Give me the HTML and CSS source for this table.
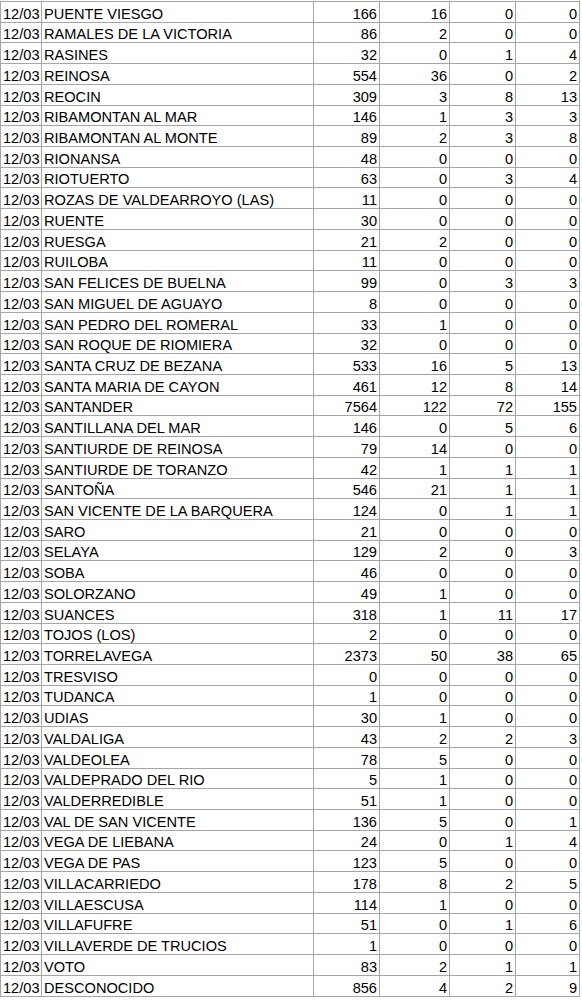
FILE: index.html
```html
<!DOCTYPE html>
<html lang="es">
<head>
<meta charset="utf-8">
<title>Datos municipios</title>
<link rel="stylesheet" href="styles.css">
</head>
<body>
<table class="sheet">
<colgroup>
<col class="c-date"><col class="c-name"><col class="c-n1"><col class="c-n2"><col class="c-n3"><col class="c-n4">
</colgroup>
<tbody>
<tr><td>12/03</td><td>PUENTE VIESGO</td><td class="num">166</td><td class="num">16</td><td class="num">0</td><td class="num">0</td></tr>
<tr><td>12/03</td><td>RAMALES DE LA VICTORIA</td><td class="num">86</td><td class="num">2</td><td class="num">0</td><td class="num">0</td></tr>
<tr><td>12/03</td><td>RASINES</td><td class="num">32</td><td class="num">0</td><td class="num">1</td><td class="num">4</td></tr>
<tr><td>12/03</td><td>REINOSA</td><td class="num">554</td><td class="num">36</td><td class="num">0</td><td class="num">2</td></tr>
<tr><td>12/03</td><td>REOCIN</td><td class="num">309</td><td class="num">3</td><td class="num">8</td><td class="num">13</td></tr>
<tr><td>12/03</td><td>RIBAMONTAN AL MAR</td><td class="num">146</td><td class="num">1</td><td class="num">3</td><td class="num">3</td></tr>
<tr><td>12/03</td><td>RIBAMONTAN AL MONTE</td><td class="num">89</td><td class="num">2</td><td class="num">3</td><td class="num">8</td></tr>
<tr><td>12/03</td><td>RIONANSA</td><td class="num">48</td><td class="num">0</td><td class="num">0</td><td class="num">0</td></tr>
<tr><td>12/03</td><td>RIOTUERTO</td><td class="num">63</td><td class="num">0</td><td class="num">3</td><td class="num">4</td></tr>
<tr><td>12/03</td><td>ROZAS DE VALDEARROYO (LAS)</td><td class="num">11</td><td class="num">0</td><td class="num">0</td><td class="num">0</td></tr>
<tr><td>12/03</td><td>RUENTE</td><td class="num">30</td><td class="num">0</td><td class="num">0</td><td class="num">0</td></tr>
<tr><td>12/03</td><td>RUESGA</td><td class="num">21</td><td class="num">2</td><td class="num">0</td><td class="num">0</td></tr>
<tr><td>12/03</td><td>RUILOBA</td><td class="num">11</td><td class="num">0</td><td class="num">0</td><td class="num">0</td></tr>
<tr><td>12/03</td><td>SAN FELICES DE BUELNA</td><td class="num">99</td><td class="num">0</td><td class="num">3</td><td class="num">3</td></tr>
<tr><td>12/03</td><td>SAN MIGUEL DE AGUAYO</td><td class="num">8</td><td class="num">0</td><td class="num">0</td><td class="num">0</td></tr>
<tr><td>12/03</td><td>SAN PEDRO DEL ROMERAL</td><td class="num">33</td><td class="num">1</td><td class="num">0</td><td class="num">0</td></tr>
<tr><td>12/03</td><td>SAN ROQUE DE RIOMIERA</td><td class="num">32</td><td class="num">0</td><td class="num">0</td><td class="num">0</td></tr>
<tr><td>12/03</td><td>SANTA CRUZ DE BEZANA</td><td class="num">533</td><td class="num">16</td><td class="num">5</td><td class="num">13</td></tr>
<tr><td>12/03</td><td>SANTA MARIA DE CAYON</td><td class="num">461</td><td class="num">12</td><td class="num">8</td><td class="num">14</td></tr>
<tr><td>12/03</td><td>SANTANDER</td><td class="num">7564</td><td class="num">122</td><td class="num">72</td><td class="num">155</td></tr>
<tr><td>12/03</td><td>SANTILLANA DEL MAR</td><td class="num">146</td><td class="num">0</td><td class="num">5</td><td class="num">6</td></tr>
<tr><td>12/03</td><td>SANTIURDE DE REINOSA</td><td class="num">79</td><td class="num">14</td><td class="num">0</td><td class="num">0</td></tr>
<tr><td>12/03</td><td>SANTIURDE DE TORANZO</td><td class="num">42</td><td class="num">1</td><td class="num">1</td><td class="num">1</td></tr>
<tr><td>12/03</td><td>SANTOÑA</td><td class="num">546</td><td class="num">21</td><td class="num">1</td><td class="num">1</td></tr>
<tr><td>12/03</td><td>SAN VICENTE DE LA BARQUERA</td><td class="num">124</td><td class="num">0</td><td class="num">1</td><td class="num">1</td></tr>
<tr><td>12/03</td><td>SARO</td><td class="num">21</td><td class="num">0</td><td class="num">0</td><td class="num">0</td></tr>
<tr><td>12/03</td><td>SELAYA</td><td class="num">129</td><td class="num">2</td><td class="num">0</td><td class="num">3</td></tr>
<tr><td>12/03</td><td>SOBA</td><td class="num">46</td><td class="num">0</td><td class="num">0</td><td class="num">0</td></tr>
<tr><td>12/03</td><td>SOLORZANO</td><td class="num">49</td><td class="num">1</td><td class="num">0</td><td class="num">0</td></tr>
<tr><td>12/03</td><td>SUANCES</td><td class="num">318</td><td class="num">1</td><td class="num">11</td><td class="num">17</td></tr>
<tr><td>12/03</td><td>TOJOS (LOS)</td><td class="num">2</td><td class="num">0</td><td class="num">0</td><td class="num">0</td></tr>
<tr><td>12/03</td><td>TORRELAVEGA</td><td class="num">2373</td><td class="num">50</td><td class="num">38</td><td class="num">65</td></tr>
<tr><td>12/03</td><td>TRESVISO</td><td class="num">0</td><td class="num">0</td><td class="num">0</td><td class="num">0</td></tr>
<tr><td>12/03</td><td>TUDANCA</td><td class="num">1</td><td class="num">0</td><td class="num">0</td><td class="num">0</td></tr>
<tr><td>12/03</td><td>UDIAS</td><td class="num">30</td><td class="num">1</td><td class="num">0</td><td class="num">0</td></tr>
<tr><td>12/03</td><td>VALDALIGA</td><td class="num">43</td><td class="num">2</td><td class="num">2</td><td class="num">3</td></tr>
<tr><td>12/03</td><td>VALDEOLEA</td><td class="num">78</td><td class="num">5</td><td class="num">0</td><td class="num">0</td></tr>
<tr><td>12/03</td><td>VALDEPRADO DEL RIO</td><td class="num">5</td><td class="num">1</td><td class="num">0</td><td class="num">0</td></tr>
<tr><td>12/03</td><td>VALDERREDIBLE</td><td class="num">51</td><td class="num">1</td><td class="num">0</td><td class="num">0</td></tr>
<tr><td>12/03</td><td>VAL DE SAN VICENTE</td><td class="num">136</td><td class="num">5</td><td class="num">0</td><td class="num">1</td></tr>
<tr><td>12/03</td><td>VEGA DE LIEBANA</td><td class="num">24</td><td class="num">0</td><td class="num">1</td><td class="num">4</td></tr>
<tr><td>12/03</td><td>VEGA DE PAS</td><td class="num">123</td><td class="num">5</td><td class="num">0</td><td class="num">0</td></tr>
<tr><td>12/03</td><td>VILLACARRIEDO</td><td class="num">178</td><td class="num">8</td><td class="num">2</td><td class="num">5</td></tr>
<tr><td>12/03</td><td>VILLAESCUSA</td><td class="num">114</td><td class="num">1</td><td class="num">0</td><td class="num">0</td></tr>
<tr><td>12/03</td><td>VILLAFUFRE</td><td class="num">51</td><td class="num">0</td><td class="num">1</td><td class="num">6</td></tr>
<tr><td>12/03</td><td>VILLAVERDE DE TRUCIOS</td><td class="num">1</td><td class="num">0</td><td class="num">0</td><td class="num">0</td></tr>
<tr><td>12/03</td><td>VOTO</td><td class="num">83</td><td class="num">2</td><td class="num">1</td><td class="num">1</td></tr>
<tr><td>12/03</td><td>DESCONOCIDO</td><td class="num">856</td><td class="num">4</td><td class="num">2</td><td class="num">9</td></tr>
</tbody>
</table>
</body>
</html>
```

FILE: styles.css
```css
html, body {
  margin: 0;
  padding: 0;
  background: #ffffff;
}

.sheet {
  margin-top: 1px;
  border-collapse: collapse;
  table-layout: fixed;
  width: 580px;
  font-family: "Liberation Sans", Arial, sans-serif;
  font-size: 14.6px;
  color: #000000;
}

.c-date { width: 41px; }
.c-name { width: 272px; }
.c-n1 { width: 66px; }
.c-n2 { width: 70px; }
.c-n3 { width: 66px; }
.c-n4 { width: 64px; }

.sheet tr {
  height: 20.73px;
}

.sheet td {
  border: 1px solid #a6a6a6;
  padding: 0 2px 0 2px;
  line-height: 16px;
  vertical-align: bottom;
  white-space: nowrap;
  overflow: hidden;
}

.sheet td.num {
  text-align: right;
}
```
